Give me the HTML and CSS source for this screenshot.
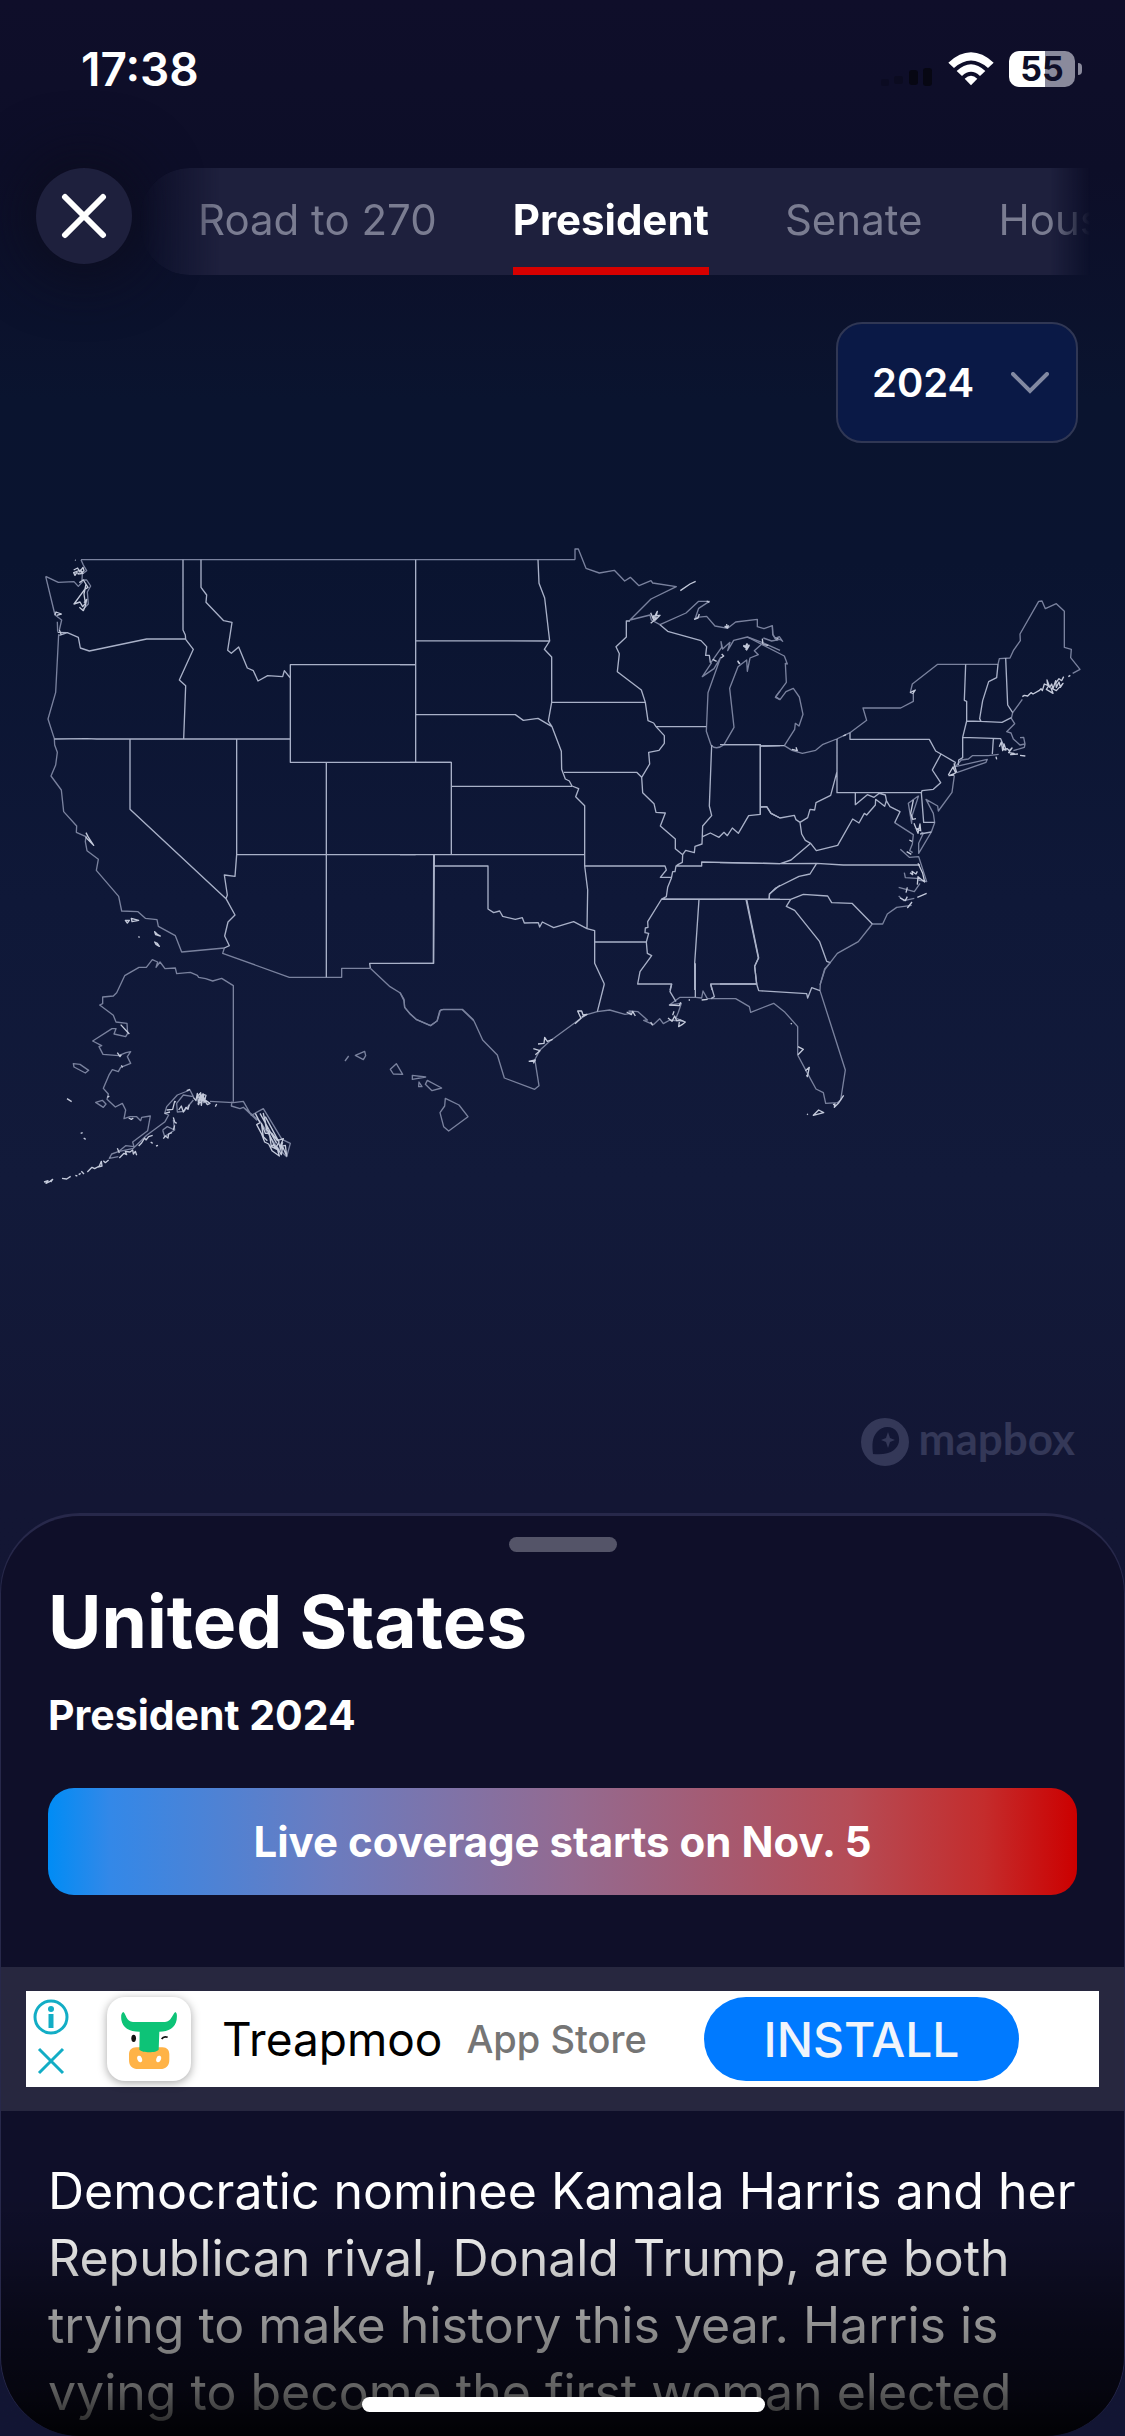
FILE: index.html
```html
<!DOCTYPE html>
<html lang="en">
  <head>
    <meta charset="UTF-8" />
    <meta name="viewport" content="width=device-width, initial-scale=1.0" />
    <title>United States - President 2024</title>
    <link rel="stylesheet" href="styles.css" />
  </head>
  <body>
    <div class="status-bar">
      <span class="time">17:38</span>
      <div class="status-icons">
        <svg class="signal" viewBox="0 0 54 20" aria-hidden="true">
          <rect x="2" y="12" width="8" height="7" rx="2" opacity=".3" />
          <rect x="15" y="9" width="9" height="8" rx="2" opacity=".4" />
          <rect x="30" y="3" width="9" height="15" rx="3" />
          <rect x="44" y="1" width="9" height="18" rx="3" />
        </svg>
        <svg class="wifi" viewBox="0 0 138 100" aria-hidden="true">
          <path d="M1 31Q69 -31 137 31L120 47Q69 2 18 47Z" />
          <path d="M26 56Q69 15 112 56L96 71Q69 46 42 71Z" />
          <path d="M50 79Q69 61 88 79L69 99Z" />
        </svg>
        <div class="battery"><span>55</span></div>
      </div>
    </div>

    <header class="top-nav">
      <button class="close" aria-label="Close">
        <svg viewBox="0 0 46 46"><path d="M4 4L42 42M42 4L4 42" /></svg>
      </button>
      <nav class="tabs">
        <a href="#road">Road to 270</a>
        <a href="#president" class="active">President</a>
        <a href="#senate">Senate</a>
        <a href="#house">House</a>
      </nav>
    </header>

    <main>
      <div class="year-row">
        <div class="year-picker">
          <select aria-label="Election year">
            <option>2024</option>
            <option>2020</option>
            <option>2016</option>
          </select>
          <svg viewBox="0 0 38 22" aria-hidden="true"><path d="M2 2L19 19L36 2" /></svg>
        </div>
      </div>

      <svg class="map" viewBox="0 0 3375 2010" role="img" aria-label="Map of the United States">
        <!-- west -->
        <g transform="translate(90 0)">
          <path class="coast" d="M153 89H1635M153 89L160 105L170 122L157 132L156 150L170 150L182 168L172 186L175 222L157 240M47 139L75 255L95 270L88 300M47 139L85 157L132 155L145 169L158 155M82 275L83 305M86 313L77 487L54 567L73 626L74 645L82 667L77 705L63 738L94 780L101 845L140 888L139 907L168 920L166 935L171 962L205 988L199 1021L266 1099L275 1143L324 1145L346 1165L381 1169L385 1189L436 1217L455 1266L583 1254L578 1270L778 1342H935V1315H1020" />
          <path class="border" d="M459 89V300L466 315L467 328L490 358L448 450L467 467L461 626M83 307L112 308L145 322L151 354L178 363L350 327H467M88 316L112 308M513 89V172L530 195L528 217L581 272L606 277L593 361L604 370L626 351L652 414L670 422L684 453L713 437L758 440L763 422L781 444V404H1157M781 444V697H1157M73 627L170 626L200 627H781M300 627V838L588 1106L615 1155L594 1176L584 1218L598 1247L583 1254M588 1106L592 1095L583 1035L615 1039L620 974V627M620 974H1157M889 697V1342M1157 697H1264M1211 974L1210 1300H1019L1021 1314" />
          <path class="detail" d="M135 90l2 1M131 120l12 -6l6 12l10 -14l3 10l-12 10l-10 -4l-5 8l-4 -8l20 -8l8 10l-16 2M148 158l12 -8l14 22l-10 6l-32 44l18 -6l8 14l8 -10l-4 -28l6 -30M148 232l12 10l6 -14l4 -20l-8 10M75 255l3 -9l16 6l-14 4M168 908l6 12l17 26l-18 -18l-6 -8M286 1171l6 8l6 -8zM304 1165l22 6l-20 4zM325 1220l4 2M374 1205l8 8l9 5l-14 -4zM374 1236l8 4l6 9l-10 -6zM88 300l6 14" />
        </g>

        <!-- plains, midwest and great lakes -->
        <g transform="translate(1200 0)">
          <path class="coast" d="M525 89V57H535L558 115L598 129L643 121L674 153L691 142L717 167L753 152L758 159L829 170L753 207L690 270L750 255L754 270L780 284L858 249L896 214H928L896 235L885 267L890 262L920 259L945 288L983 295L1007 276L1072 268V290L1092 296L1117 287L1119 315L1130 330M935 398L907 440L942 416L962 382L924 488L919 604L933 645Q948 662 972 644L1002 592L989 475L1014 410L1040 390L1042 424L1050 384L1075 374L1063 362L1088 340M965 352L931 400M965 352L963 335L968 357L990 337L983 362L1001 331L1042 321L1088 338L1140 361M1140 483L1127 500L1140 509" />
          <path class="border" d="M47 89V697M0 404H47M414 89L417 160L434 204L449 333L433 358L455 381V517L445 573L456 590L484 664L485 718L496 747L508 753L516 768L536 776L527 800L554 827V1008L563 1080L561 1196L584 1202V1300L613 1362M47 332L449 333M47 554H346L370 571L414 565L456 590M455 517H736M690 273H679V321L648 350L658 371L652 425L724 480L736 517L744 572L761 579L768 590L793 617V640L777 661L746 667L749 702L725 742L728 788L762 821L768 847L796 849L781 888L826 927V956L848 974L847 997L835 1003L828 1008L825 1025H818L814 1045L803 1072L799 1100L785 1107L743 1175L744 1192L736 1194L735 1208L746 1210L739 1236L742 1270L755 1277L720 1325L713 1362H815L810 1380M780 284L803 304L903 332L920 350L917 376H928L931 398M768 590H919M492 727H710L725 742M0 697H154V974M154 769H516M0 974H553M103 974V1008H264V1137L281 1148L299 1143L308 1159L346 1168L367 1163L373 1179L415 1178L419 1191L427 1176L461 1193L521 1175L561 1196M103 974L101 1300H0M554 1008H795L799 1020L781 1042H815M828 1008H905V996L1140 1001M935 645L928 828L935 857L908 888L906 942L885 949L883 968L857 961L848 974M908 920L931 909L957 922L972 907L982 917L997 894L1015 910L1046 857L1081 853V644H972M1081 648L1140 647M1081 831L1100 830L1113 850L1140 864M785 1107L1140 1108M897 1108L884 1300V1380M1038 1108L1075 1284L1064 1309L1070 1362H932L936 1380M584 1236H739M1140 1066L1108 1092V1107" />
          <path class="detail" d="M841 182L870 162L887 154M752 248l8 20l12 -24l-6 26l14 -14l-20 2l4 12l-12 10M898 252l-4 12l-12 4M920 213l8 4M974 288l8 4l-2 -8l4 10M1030 348l6 4l4 -10l-2 16l10 -14M965 372l6 6l-8 6M938 388l12 6M1013 392l4 8M1087 326l2 18l16 2M1125 322l6 8l4 -8" />
        </g>

        <!-- northeast and atlantic -->
        <g transform="translate(2160 0)">
          <path class="coast" d="M157 287L158 312L165 325L178 320L188 334L180 328L155 333L130 324M82 321L193 378L202 402L196 400L199 457L166 502L180 509L198 485L220 475L238 501L249 553L237 588L226 580L224 598L193 647L216 661L247 670L287 661L309 643L350 627L390 608L440 571L429 534H542L580 514V492L571 487L577 462L653 403H834L838 386L870 384L880 362L901 332L900 312L956 214L966 213L976 236L1009 221L1033 244V352L1054 358L1052 383L1080 418L1058 430M907 508L878 548L874 565L884 581L860 605L873 609L880 627L900 645L915 642L911 622L900 623M915 642L913 652L880 662M836 673L805 677H757L745 687L724 690L706 710L802 688L798 697L710 728M703 737L696 787L655 843L653 828L618 808L640 850L644 878L634 906L596 970V940L610 910L604 906M596 797L576 858L575 880L565 820L596 797M524 878L580 914L577 942L569 962L578 968M541 958L568 982L596 980L620 1055L595 1050M553 1028L556 1043L600 1046M536 1072L583 1085L600 1060M583 1105L552 1112L536 1098M575 1126L530 1132L502 1152L488 1182L457 1182L415 1235L352 1270L315 1318L300 1365" />
          <path class="border" d="M121 853V644H0M121 648L193 647M351 627V725L332 796L288 818L284 840L270 838L263 863L240 877L245 912L256 931L272 940L289 962L353 946L398 867L417 879L433 850L440 855L466 825L467 808L494 829L499 812L510 830L540 845L524 878M351 725V788H604M390 608V628H628L647 663L663 672L637 720L662 758L640 778L606 782L604 788L611 877H644M663 672L706 697L700 718M406 788V824L442 794L462 802L478 790L496 795L500 815M737 403L733 511L740 514V573L728 622V683L716 690L715 705M740 573L782 574L846 577L874 563M834 403L830 443L806 455L788 512L779 566L783 574M857 384L863 525L878 548M728 622L842 626L852 650M820 627L817 672M0 998L181 1001L290 1000L370 1005H600M121 831L140 830L153 850L180 864L223 856L228 869L240 877M272 940L213 990L181 1001M290 1000L270 1032L237 1039L167 1074L149 1092L147 1107M0 1108H212L250 1093L323 1098L335 1118L396 1120L457 1182M212 1108L199 1129L224 1141L299 1235L320 1294L331 1298M80 1108L116 1284L104 1309L110 1362H0M600 912L634 906" />
          <path class="detail" d="M14 290l8 4l4 -8M70 346l8 4l4 -8l-2 18l8 -14M54 394l6 8M216 658l16 4l-4 -10M370 618l8 -4M570 488l16 -8l-8 12M1045 440l6 -4M907 500l6 -4l10 2l10 -10l6 4l18 -10l6 -6l4 6l6 -20l10 4l-2 -16l8 22l6 -10l4 14l8 -24l2 20l8 -16l4 16l8 -12l-20 22l-16 -8l6 16l-20 -12l8 -12M1005 462l12 -16l8 6l6 -12M838 650l6 -14l4 26l4 -20l6 18l-10 -2l14 -2l6 6l8 -8l-10 14l16 2l-10 4l22 -2M900 676l16 2M828 680l2 8M685 735l14 -24l8 18l-20 8l16 -2M702 700l8 28M580 810l-8 40l6 18l10 -2M582 880l12 30l6 -28l2 20l-18 -10M568 930l8 4M560 965l14 8M570 1028l8 6l-2 -10l12 8l4 -8M594 1000l14 30l6 26l-20 -16l-2 24M562 1072l-4 16M540 1104l16 8l6 -12M592 1102l28 -12M562 1134l14 -18" />
        </g>

        <!-- alaska, hawaii and southern rim -->
        <g transform="translate(90 1110)">
          <path class="coast" d="M610 605V257L575 235L548 243L527 236L506 232L502 226L481 217L440 221L436 204L405 206L390 186L378 202L383 186L367 179L349 202H327L284 227L260 278L250 288L218 291V311L209 315L250 346L258 366L291 370L293 400L287 410L252 402L258 386H246L188 423L215 437L207 440L219 463L266 467L288 458L302 455L292 470L302 490L272 502L265 515L247 509L238 523L220 565L235 582L231 598L256 621L277 610L287 630L282 656L300 650L320 650L332 662L335 652L361 648L353 692L308 726L312 740L287 737L265 755M265 770L238 775L245 762L265 755L310 745L350 706L405 665L416 645L404 640L410 620L442 585L480 570L490 590L460 585L440 610L442 636L462 634L490 600M540 604L610 608L640 604L664 646L700 626L756 718L781 730L770 770L740 740L690 664L640 622L630 626L604 618L606 605M640 622L680 660L668 644M130 491L150 493L176 511L166 519L132 501ZM197 607L217 601L228 612L220 622ZM398 690L412 680L434 690L430 660M398 690L404 710L434 690M1021 205L1080 260L1111 279L1122 298L1124 322L1141 343L1160 359L1202 377L1222 362L1231 331L1240 328H1297L1331 360" />
          <path class="coast" d="M1246 595L1287 615L1314 650L1256 693L1241 680L1230 638L1244 618ZM976 466L1004 454L1007 467L1000 479ZM1081 508L1099 491L1118 523L1090 522ZM1147 526L1187 531L1147 538ZM1192 541L1235 564L1206 572L1186 553ZM1167 546L1176 560L1166 560ZM945 483L956 468" />
          <path class="detail" d="M272 374l26 28M111 596l14 9M152 700l6 -2M161 714l6 4M42 846l12 -4l-6 8l12 -6l8 -6l-6 8M96 835l14 2l12 -8M136 826l6 2M146 824l6 -4M154 814l8 8M172 816l14 -14l8 4l14 -8l6 -14l2 14l-16 4M220 782l6 6l10 -8M262 745l6 14M268 774l14 -14l8 4l-4 -10l14 2l8 -6l2 12l6 -8l4 12M326 738l8 -8l10 -16l4 6l8 -10l12 -4M362 726l6 4M378 738l6 -2M400 716l6 -8l8 6l2 -12l10 -4M430 652l4 14l6 4M430 690l4 -14M404 640l16 -4M410 630l18 -2l6 -24l4 2M446 630l8 -12l6 18l8 -14l6 6l4 -14M490 592l8 10l4 -22l4 34l6 -36l2 38l6 -34l2 26l6 -22l-10 -4l-14 30l22 -16l-24 -6l8 -10l22 34l8 -4l-30 -20M556 620l4 -8M470 572l10 -4M296 654l8 4l6 -4M262 458l8 12l4 -6M232 592l6 -4M274 496l4 6" />
          <path class="detail" d="M676 640L690 668L680 674L694 700L704 726L716 732L726 752L748 768L740 740L754 764L758 740L770 768L766 736L750 740L760 716L742 722L726 700L710 690L700 640L712 690L730 730L744 750L724 740L718 700L706 700L694 670L700 710L712 722M690 640L740 730M706 650L748 728M720 744l10 -10l6 12l10 -18l6 20l6 -22" />
        </g>

        <!-- gulf coast and florida -->
        <g transform="translate(1200 930)">
          <path class="coast" d="M0 458L12 482L14 502L32 523L50 539L91 557L111 543L119 513L124 509H187L222 543L248 600L292 645L313 714L404 748L417 737L406 668L404 660L420 630L450 603L540 537L560 524L592 515L629 510L675 523L692 520L687 513L714 515L742 540L731 541L760 554L779 536L790 551L810 540L850 544L828 534L835 517L844 490L808 495L840 472H886L905 474L909 453L922 476L933 476H1007L1048 500L1052 517L1121 490L1155 517L1193 560V645L1218 692L1248 747L1270 758L1277 790L1312 788L1322 780L1336 690L1260 452L1261 432L1274 387L1291 368" />
          <path class="border" d="M613 432L592 515M815 432L810 455L828 485M886 370V472M932 432L943 470L933 476M1070 432L1076 452L1220 461L1223 474L1235 443L1260 452" />
          <path class="detail" d="M386 664l20 -4l-6 10M400 626l20 6l-14 12M414 612l18 -2l2 -18l8 12l16 -6M525 551l18 -16l-10 -22h12l4 12l12 -2l-16 8M680 516l14 8l4 -10l8 14M752 546l6 10M804 534l12 10l8 -16l6 14l12 -2l14 6l-10 8l-10 6l2 -14M822 514l-4 12M905 480l18 -2M808 495l30 2l4 -10M866 480l4 0M1194 620l16 8l-16 16M1216 692l12 -10l-6 28l-2 -6M1172 550l4 2M1331 766l-16 24l-12 12l2 -10l-6 2M1240 826l16 -16l15 8zM1221 822l3 2" />
        </g>
      </svg>

      <div class="attribution">
        <svg viewBox="0 0 48 48" aria-hidden="true">
          <path fill-rule="evenodd" d="M24 0a24 24 0 1 0 0 48a24 24 0 0 0 0-48ZM12 36C11 26 11 20 16 14C22 7 32 8 36 14C40 21 38 28 33 32C28 36 20 37 12 36Z" />
          <path d="M27 14l2 6l5 2l-5 2l-2 6l-2-6l-5-2l5-2z" />
        </svg>
        <span>mapbox</span>
      </div>
    </main>

    <section class="sheet">
      <div class="handle"></div>
      <h1>United States</h1>
      <h2>President 2024</h2>
      <a class="coverage" href="#live">Live coverage starts on Nov. 5</a>

      <div class="ad-band">
        <div class="ad">
          <div class="ad-choices">
            <svg viewBox="0 0 36 36" aria-hidden="true">
              <circle cx="18" cy="18" r="16" />
              <circle class="solid" cx="18" cy="10" r="3" />
              <path class="stem" d="M18 15V29" />
            </svg>
            <button aria-label="Close ad">
              <svg viewBox="0 0 28 28"><path d="M2 2L26 26M26 2L2 26" /></svg>
            </button>
          </div>
          <svg class="app-icon" viewBox="0 0 252 252" aria-hidden="true">
            <path fill="#ffb347" d="M94 151H160C178 148 187 157 187 172V188C187 207 176 216 160 216H94C76 216 66 207 66 188V172C66 157 76 148 94 151Z" />
            <path fill="#0dc377" d="M49 45C58 52 57 74 78 75H174C194 73 196 52 205 45C211 49 210 57 209 68C205 92 185 104 157 104L155 158C148 168 106 168 97 158L98 104C66 104 47 92 43 68C42 57 42 49 49 45Z" />
            <ellipse cx="80" cy="124" rx="7" ry="11" fill="#111" />
            <path d="M164 126Q170 116 182 121" fill="none" stroke="#111" stroke-width="5" />
            <ellipse cx="98" cy="186" rx="7" ry="10" fill="#fff" transform="rotate(-20 98 186)" />
            <ellipse cx="155" cy="186" rx="7" ry="10" fill="#fff" transform="rotate(20 155 186)" />
          </svg>
          <span class="app-name">Treapmoo</span>
          <span class="app-store">App Store</span>
          <button class="install">INSTALL</button>
        </div>
      </div>

      <p>Democratic nominee Kamala Harris and her Republican rival, Donald Trump, are both trying to make history this year. Harris is vying to become the first woman elected</p>
      <div class="fade"></div>
      <div class="home-indicator"></div>
    </section>
  </body>
</html>
```
FILE: styles.css
```css
* {
  box-sizing: border-box;
}

body {
  display: flex;
  flex-direction: column;
  min-height: 100vh;
  margin: 0;
  overflow-x: hidden;
  color: #fff;
  font-family: "Inter", "Liberation Sans", sans-serif;
  font-size: 42px;
  background: linear-gradient(#0f0e2a 0, #0d0e28 170px, #0a142f 400px, #0a1430 560px, #0f1838 900px, #121a3a 1180px, #131634 1500px, #121533 100%);
}

button {
  padding: 0;
  border: none;
  font-family: inherit;
  cursor: pointer;
}

a {
  color: inherit;
  text-decoration: none;
}

/* status bar */
.status-bar {
  display: flex;
  justify-content: space-between;
  align-items: center;
  height: 138px;
  padding: 0 43px 0 81px;
}

.time {
  font-size: 46px;
  font-weight: 600;
}

.status-icons {
  display: flex;
  align-items: center;
  gap: 15px;
}

.signal {
  width: 54px;
  height: 20px;
  margin-top: 16px;
  fill: #070713;
}

.wifi {
  width: 46px;
  height: 34px;
  fill: #fff;
}

.battery {
  position: relative;
  width: 66px;
  height: 36px;
  margin-right: 7px;
  border-radius: 10px;
  background: linear-gradient(90deg, #fff 54%, #8a8a9c 54%);
  color: #0e0e28;
  font-size: 34px;
  font-weight: 700;
  line-height: 36px;
  text-align: center;
}

.battery::after {
  content: "";
  position: absolute;
  top: 12px;
  right: -7px;
  width: 4px;
  height: 12px;
  border-radius: 0 4px 4px 0;
  background: #8a8a9c;
}

/* navigation */
.top-nav {
  display: flex;
  gap: 8px;
  margin-top: 30px;
  padding: 0 35px 0 36px;
}

.close {
  display: flex;
  flex: none;
  justify-content: center;
  align-items: center;
  width: 96px;
  height: 96px;
  border-radius: 50%;
  background: #1e203d;
  box-shadow: 0 0 60px 10px #0c0d1e;
}

.close svg {
  width: 46px;
  fill: none;
  stroke: #fff;
  stroke-width: 6;
  stroke-linecap: round;
}

.tabs {
  display: flex;
  flex: 1;
  gap: 76px;
  min-width: 0;
  height: 107px;
  padding-left: 58px;
  overflow: hidden;
  border-radius: 50px 0 0 50px;
  background: #1e203d;
  color: #7a7c91;
  line-height: 104px;
  white-space: nowrap;
  -webkit-mask-image: linear-gradient(90deg, transparent 0, #000 80px, #000 calc(100% - 40px), transparent);
  mask-image: linear-gradient(90deg, transparent 0, #000 80px, #000 calc(100% - 40px), transparent);
}

.tabs .active {
  height: 107px;
  border-bottom: 8px solid #d60000;
  color: #fff;
  font-weight: 700;
}

/* map */
.year-row {
  display: flex;
  justify-content: flex-end;
  margin-top: 47px;
  padding-right: 47px;
}

.year-picker {
  display: grid;
  align-items: center;
  width: 242px;
}

.year-picker select,
.year-picker svg {
  grid-area: 1 / 1;
}

.year-picker select {
  height: 121px;
  padding: 0 34px;
  border: 2px solid #303754;
  border-radius: 26px;
  background: #0a1946;
  color: #fff;
  font-family: inherit;
  font-size: 40px;
  font-weight: 600;
  -webkit-appearance: none;
  appearance: none;
}

.year-picker svg {
  justify-self: end;
  width: 38px;
  margin-right: 29px;
  fill: none;
  stroke: #8289a2;
  stroke-width: 4;
  stroke-linecap: round;
  pointer-events: none;
}

.map {
  display: block;
  width: 100%;
  margin-top: 87px;
  fill: none;
  stroke-linejoin: round;
}

.coast {
  stroke: #7a829e;
  stroke-width: 4;
}

.border {
  stroke: #a9b1c8;
  stroke-width: 4;
}

.detail {
  stroke: #c4cadb;
  stroke-width: 4;
}

.attribution {
  display: flex;
  justify-content: flex-end;
  align-items: center;
  gap: 10px;
  height: 48px;
  margin: 218px 50px 47px;
  color: #343858;
  fill: #343858;
  font-family: "Lato", sans-serif;
  font-size: 44px;
  font-weight: 700;
}

.attribution svg {
  width: 48px;
}

.attribution span {
  padding-bottom: 8px;
}

/* bottom sheet */
.sheet {
  position: relative;
  flex: 1;
  overflow: hidden;
  border: solid #27284a;
  border-width: 3px 1px 0;
  border-radius: 80px;
  background: #0f0f29;
}

.handle {
  width: 108px;
  height: 15px;
  margin: 21px auto 0;
  border-radius: 8px;
  background: #545468;
}

h1 {
  margin: 24px 47px 0;
  font-size: 73px;
  font-weight: 700;
  line-height: 92px;
}

h2 {
  margin: 22px 47px 0;
  font-size: 41px;
  font-weight: 700;
  line-height: 50px;
}

.coverage {
  display: block;
  margin: 48px 47px 72px;
  border-radius: 26px;
  background: linear-gradient(90deg, #008cf5 0, #3388e8 6%, #6a7cc0 27%, #946a90 51%, #b54c56 78%, #c42c2c 91%, #cc0000 100%);
  font-weight: 700;
  line-height: 107px;
  text-align: center;
}

.ad-band {
  padding: 24px 25px;
  background: #27273f;
}

.ad {
  display: flex;
  align-items: center;
  height: 96px;
  padding: 0 80px 0 7px;
  background: #fff;
}

.ad-choices {
  display: flex;
  flex-direction: column;
  align-items: center;
  gap: 12px;
  width: 36px;
  margin-right: 38px;
  padding-bottom: 4px;
  fill: none;
  stroke: #12adc5;
  stroke-width: 3;
}

.ad-choices svg {
  display: block;
  width: 36px;
}

.ad-choices button {
  background: none;
}

.ad-choices button svg {
  width: 28px;
}

.ad-choices .solid {
  fill: #12adc5;
  stroke: none;
}

.ad-choices .stem {
  stroke-width: 5;
}

.app-icon {
  width: 84px;
  height: 84px;
  border-radius: 18px;
  background: #fff;
  box-shadow: 0 2px 10px rgba(0, 0, 0, 0.35);
}

.app-name {
  margin-left: 31px;
  color: #000;
  font-size: 46px;
}

.app-store {
  margin-left: 24px;
  color: #757575;
  font-size: 38px;
  font-weight: 500;
}

.install {
  width: 315px;
  height: 84px;
  margin-left: auto;
  border-radius: 42px;
  background: #007aff;
  color: #f0f4fb;
  font-size: 48px;
  font-weight: 500;
}

p {
  margin: 47px 40px 0 47px;
  font-size: 50px;
  line-height: 67px;
}

/* darkens the text that runs under the home indicator */
.fade {
  position: absolute;
  right: 0;
  bottom: 0;
  left: 0;
  height: 240px;
  background: linear-gradient(transparent, rgba(0, 0, 0, 0.1) 20%, rgba(0, 0, 0, 0.42) 52%, rgba(0, 0, 0, 0.62) 80%, rgba(0, 0, 0, 0.9));
}

.home-indicator {
  position: absolute;
  bottom: 24px;
  left: 50%;
  width: 403px;
  height: 15px;
  margin-left: -201px;
  border-radius: 8px;
  background: #fff;
}
```
